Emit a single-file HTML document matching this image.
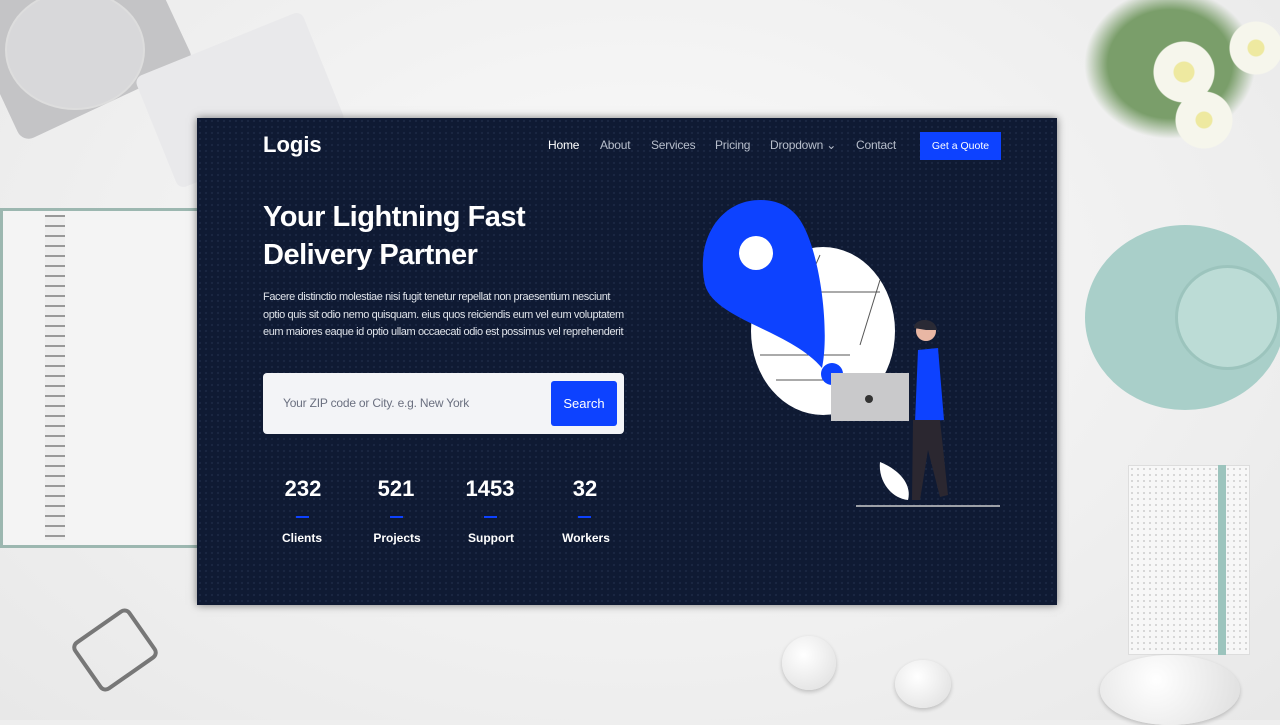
<!DOCTYPE html>
<html><head><style>
*{margin:0;padding:0;box-sizing:border-box}
body{width:1280px;height:720px;overflow:hidden;background:#eeeeee;position:relative;font-family:"Liberation Sans",sans-serif}
.a{position:absolute}
#panel{left:197px;top:118px;width:860px;height:487px;background:#0f1a33;box-shadow:0 0 8px rgba(0,0,0,.5);overflow:hidden;
background-image:radial-gradient(circle,#1a2742 1px,transparent 1.3px);background-size:6px 6px}
.nav{color:#b8bfcc;font-size:12px;top:138px;letter-spacing:-.2px}
.w{color:#fff}
</style></head><body>
<div class="a" style="left:0;top:0;width:1280px;height:720px;background:radial-gradient(ellipse at 50% 40%,#fbfbfb,#e8e8e8)"></div>
<div class="a" style="left:-20px;top:-50px;width:190px;height:160px;background:#c4c4c6;border-radius:12px;transform:rotate(-25deg)"></div>
<div class="a" style="left:5px;top:-10px;width:140px;height:120px;border-radius:50%;background:rgba(255,255,255,.35);border:2px solid #ddd"></div>
<div class="a" style="left:150px;top:40px;width:180px;height:120px;background:#e9e9eb;border-radius:8px;transform:rotate(-22deg)"></div>
<div class="a" style="left:0;top:208px;width:200px;height:340px;background:#f4f4f4;border:3px solid #9cb7b0"></div>
<div class="a" style="left:45px;top:215px;width:20px;height:325px;background:repeating-linear-gradient(#999 0 2px,#eee 2px 10px)"></div>
<div class="a" style="left:1085px;top:225px;width:200px;height:185px;background:#a9cfc9;border-radius:50%"></div>
<div class="a" style="left:1175px;top:265px;width:105px;height:105px;background:#bcdcd6;border-radius:50%;border:3px solid #9cc4bd"></div>
<div class="a" style="left:1128px;top:465px;width:122px;height:190px;background:#f7f7f7;border:1px solid #ddd;background-image:radial-gradient(circle,#ccc .8px,transparent 1px);background-size:6px 6px"></div>
<div class="a" style="left:1218px;top:465px;width:8px;height:190px;background:#9cc4bd"></div>
<div class="a" style="left:1080px;top:0;width:200px;height:160px;background:radial-gradient(circle at 52% 45%,#eee9a0 0 10px,#f6f6ec 11px 30px,transparent 31px),radial-gradient(circle at 88% 30%,#eee9a0 0 8px,#f6f6ec 9px 26px,transparent 27px),radial-gradient(circle at 62% 75%,#eee9a0 0 8px,#f6f6ec 9px 28px,transparent 29px),radial-gradient(ellipse at 45% 40%,#7a9e6a 0 40%,transparent 55%)"></div>
<div class="a" style="left:80px;top:620px;width:70px;height:60px;border:4px solid #777;border-radius:8px;transform:rotate(-35deg)"></div>
<div class="a" style="left:782px;top:636px;width:54px;height:54px;border-radius:50%;background:radial-gradient(circle at 40% 35%,#fff,#ddd);box-shadow:0 2px 4px rgba(0,0,0,.2)"></div>
<div class="a" style="left:895px;top:660px;width:56px;height:48px;border-radius:50%;background:radial-gradient(circle at 40% 35%,#fff,#ddd);box-shadow:0 2px 4px rgba(0,0,0,.2)"></div>
<div class="a" style="left:1100px;top:655px;width:140px;height:70px;border-radius:50%;background:radial-gradient(circle at 40% 35%,#fff,#ddd);box-shadow:0 2px 4px rgba(0,0,0,.2)"></div>

<div class="a" id="panel"></div>
<div class="a w" style="left:263px;top:132px;font-size:22px;font-weight:bold">Logis</div>
<div class="a nav w" style="left:548px">Home</div>
<div class="a nav" style="left:600px">About</div>
<div class="a nav" style="left:651px">Services</div>
<div class="a nav" style="left:715px">Pricing</div>
<div class="a nav" style="left:770px">Dropdown ⌄</div>
<div class="a nav" style="left:856px">Contact</div>
<div class="a w" style="left:920px;top:132px;width:81px;height:28px;background:#0d42ff;font-size:10.5px;line-height:28px;text-align:center">Get a Quote</div>
<div class="a w" style="left:263px;top:198px;font-size:29px;font-weight:bold;line-height:38px;letter-spacing:-.5px">Your Lightning Fast<br>Delivery Partner</div>
<div class="a" style="left:263px;top:289px;width:370px;color:#dfe3ea;font-size:11px;line-height:17.5px;letter-spacing:-.4px">Facere distinctio molestiae nisi fugit tenetur repellat non praesentium nesciunt optio quis sit odio nemo quisquam. eius quos reiciendis eum vel eum voluptatem eum maiores eaque id optio ullam occaecati odio est possimus vel reprehenderit</div>
<div class="a" style="left:263px;top:373px;width:361px;height:61px;background:#f3f4f7;border-radius:4px"></div>
<div class="a" style="left:283px;top:396px;color:#6b7080;font-size:12px;letter-spacing:-.2px">Your ZIP code or City. e.g. New York</div>
<div class="a w" style="left:551px;top:381px;width:66px;height:45px;background:#0d42ff;border-radius:3px;font-size:13px;line-height:45px;text-align:center">Search</div>
<div class="a w" style="left:263px;top:476px;width:80px;text-align:center;font-size:22px;font-weight:bold">232</div>
<div class="a w" style="left:356px;top:476px;width:80px;text-align:center;font-size:22px;font-weight:bold">521</div>
<div class="a w" style="left:450px;top:476px;width:80px;text-align:center;font-size:22px;font-weight:bold">1453</div>
<div class="a w" style="left:545px;top:476px;width:80px;text-align:center;font-size:22px;font-weight:bold">32</div>
<div class="a" style="left:296px;top:516px;width:13px;height:2px;background:#0d42ff"></div>
<div class="a" style="left:390px;top:516px;width:13px;height:2px;background:#0d42ff"></div>
<div class="a" style="left:484px;top:516px;width:13px;height:2px;background:#0d42ff"></div>
<div class="a" style="left:578px;top:516px;width:13px;height:2px;background:#0d42ff"></div>
<div class="a w" style="left:262px;top:531px;width:80px;text-align:center;font-size:12px;font-weight:bold">Clients</div>
<div class="a w" style="left:357px;top:531px;width:80px;text-align:center;font-size:12px;font-weight:bold">Projects</div>
<div class="a w" style="left:451px;top:531px;width:80px;text-align:center;font-size:12px;font-weight:bold">Support</div>
<div class="a w" style="left:546px;top:531px;width:80px;text-align:center;font-size:12px;font-weight:bold">Workers</div>
<svg class="a" style="left:690px;top:190px" width="330" height="330" viewBox="690 190 330 330">
<ellipse cx="823" cy="331" rx="72" ry="84" fill="#fff"/>
<path d="M760 292 L880 292 M760 355 L850 355 M776 380 L830 380 M820 255 L800 300 M880 280 L860 345" stroke="#555" stroke-width="1" fill="none"/>
<path d="M760 200 C720 200 695 240 705 285 C715 320 790 330 822 368 C830 330 820 250 800 220 C790 205 775 200 760 200Z" fill="#0d42ff"/>
<circle cx="756" cy="253" r="17" fill="#fff"/>
<circle cx="832" cy="374" r="11" fill="#0d42ff"/>
<rect x="831" y="373" width="78" height="48" fill="#c9c9cb"/>
<circle cx="869" cy="399" r="4" fill="#333"/>
<circle cx="926" cy="331" r="10" fill="#e9b7a4"/>
<path d="M914 328 C914 318 935 316 937 330 L926 330Z" fill="#2a2a35"/>
<path d="M918 350 L938 348 L944 420 L915 422Z" fill="#0d42ff"/>
<path d="M913 420 L940 420 L948 495 L940 497 L928 450 L920 500 L912 500Z" fill="#2b2730"/>
<path d="M880 462 C900 470 912 485 908 500 C890 498 878 480 880 462Z" fill="#fff"/>
<line x1="856" y1="506" x2="1000" y2="506" stroke="#ccc" stroke-width="1.5"/>
</svg>
</body></html>
